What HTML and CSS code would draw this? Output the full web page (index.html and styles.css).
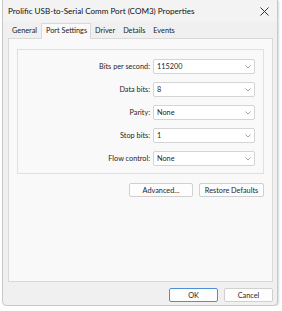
FILE: index.html
```html
<!DOCTYPE html>
<html>

<head>
	<title>Prolific USB-to-Serial Comm Port (COM3) Properties</title>
	<link rel="stylesheet" href="styles.css">
</head>

<body>
	<div class="window">
		<div class="titlebar">
			<span class="title">Prolific USB-to-Serial Comm Port (COM3) Properties</span>
			<svg class="close" width="9" height="9" viewBox="0 0 9 9">
				<path d="M0.5 0.5 L8.5 8.5 M8.5 0.5 L0.5 8.5" stroke="#333" stroke-width="1" fill="none" />
			</svg>
		</div>

		<div class="tabs">
			<span class="tab">General</span>
			<span class="tab active">Port Settings</span>
			<span class="tab">Driver</span>
			<span class="tab">Details</span>
			<span class="tab">Events</span>
		</div>

		<div class="panel">
			<div class="group">
				<div class="row">
					<label>Bits per second:</label>
					<div class="select"><span>115200</span><svg class="chev" width="6" height="4" viewBox="0 0 6 4"><path d="M0.5 0.5 L3 3 L5.5 0.5" stroke="#8c8c8c" stroke-width="0.8" fill="none" /></svg></div>
				</div>
				<div class="row">
					<label>Data bits:</label>
					<div class="select"><span>8</span><svg class="chev" width="6" height="4" viewBox="0 0 6 4"><path d="M0.5 0.5 L3 3 L5.5 0.5" stroke="#8c8c8c" stroke-width="0.8" fill="none" /></svg></div>
				</div>
				<div class="row">
					<label>Parity:</label>
					<div class="select"><span>None</span><svg class="chev" width="6" height="4" viewBox="0 0 6 4"><path d="M0.5 0.5 L3 3 L5.5 0.5" stroke="#8c8c8c" stroke-width="0.8" fill="none" /></svg></div>
				</div>
				<div class="row">
					<label>Stop bits:</label>
					<div class="select"><span>1</span><svg class="chev" width="6" height="4" viewBox="0 0 6 4"><path d="M0.5 0.5 L3 3 L5.5 0.5" stroke="#8c8c8c" stroke-width="0.8" fill="none" /></svg></div>
				</div>
				<div class="row">
					<label>Flow control:</label>
					<div class="select"><span>None</span><svg class="chev" width="6" height="4" viewBox="0 0 6 4"><path d="M0.5 0.5 L3 3 L5.5 0.5" stroke="#8c8c8c" stroke-width="0.8" fill="none" /></svg></div>
				</div>
			</div>
			<div class="actions">
				<button class="btn adv">Advanced...</button>
				<button class="btn restore">Restore Defaults</button>
			</div>
		</div>

		<div class="footer">
			<button class="btn ok">OK</button>
			<button class="btn cancel">Cancel</button>
		</div>
	</div>
</body>

</html>
```

FILE: styles.css
```css
body {
	margin: 0;
	background-color: #ffffff;
	font-family: Lato, "Noto Sans", sans-serif;
	font-size: 7.3px;
	color: #1f1f1f;
}

.window {
	margin: 0 4px 0 2px;
	height: 306px;
	background-color: #f0f0f0;
	border: 1px solid #c8c8c8;
	border-top: none;
	border-radius: 0 0 5px 5px;
	box-shadow: 1px 1px 2px rgba(0, 0, 0, 0.15);
	display: flex;
	flex-direction: column;
	box-sizing: border-box;
}

.titlebar {
	height: 22px;
	display: flex;
	align-items: center;
	justify-content: space-between;
	padding: 0 8px 0 5px;
	background-color: #f3f3f3;
}

.title {
	font-size: 8.1px;
	color: #111;
}

.tabs {
	display: flex;
	align-items: flex-end;
	height: 16px;
	padding-left: 5px;
}

.tab {
	padding: 0 4px 3px;
	color: #222;
}

.tab.active {
	background-color: #f9f9f9;
	border: 1px solid #d9d9d9;
	border-bottom: none;
	padding: 2px 3px 4px 4px;
	margin-bottom: -1px;
	position: relative;
	z-index: 1;
}

.panel {
	margin: 0 4px 0 5px;
	height: 244px;
	background-color: #f9f9f9;
	border: 1px solid #d9d9d9;
	padding: 10px 8px 0 8px;
	box-sizing: border-box;
}

.group {
	border: 1px solid #e0e0e0;
	background-color: #f9f9f9;
	padding: 9px 8px 7px 0;
	display: flex;
	flex-direction: column;
	gap: 8px;
}

.row {
	display: flex;
	align-items: center;
	justify-content: flex-end;
	gap: 3px;
}

.row label {
	text-align: right;
}

.select {
	width: 102px;
	height: 15px;
	box-sizing: border-box;
	background-color: #ffffff;
	border: 1px solid #d4d4d4;
	border-radius: 2px;
	display: flex;
	align-items: center;
	justify-content: space-between;
	padding: 0 3px 0 3px;
}

.actions {
	display: flex;
	justify-content: flex-end;
	gap: 6px;
	margin-top: 9px;
}

.btn {
	font-family: inherit;
	font-size: 7.3px;
	color: #1f1f1f;
	background-color: #fdfdfd;
	border: 1px solid #d0d0d0;
	border-radius: 2px;
	height: 14px;
	padding: 0;
}

.adv {
	width: 64px;
}

.restore {
	width: 65px;
}

.footer {
	display: flex;
	justify-content: flex-end;
	gap: 6px;
	padding: 6px 4px 0 0;
}

.ok {
	width: 49px;
	border: 1px solid #4f8fd6;
}

.cancel {
	width: 49px;
}
```
